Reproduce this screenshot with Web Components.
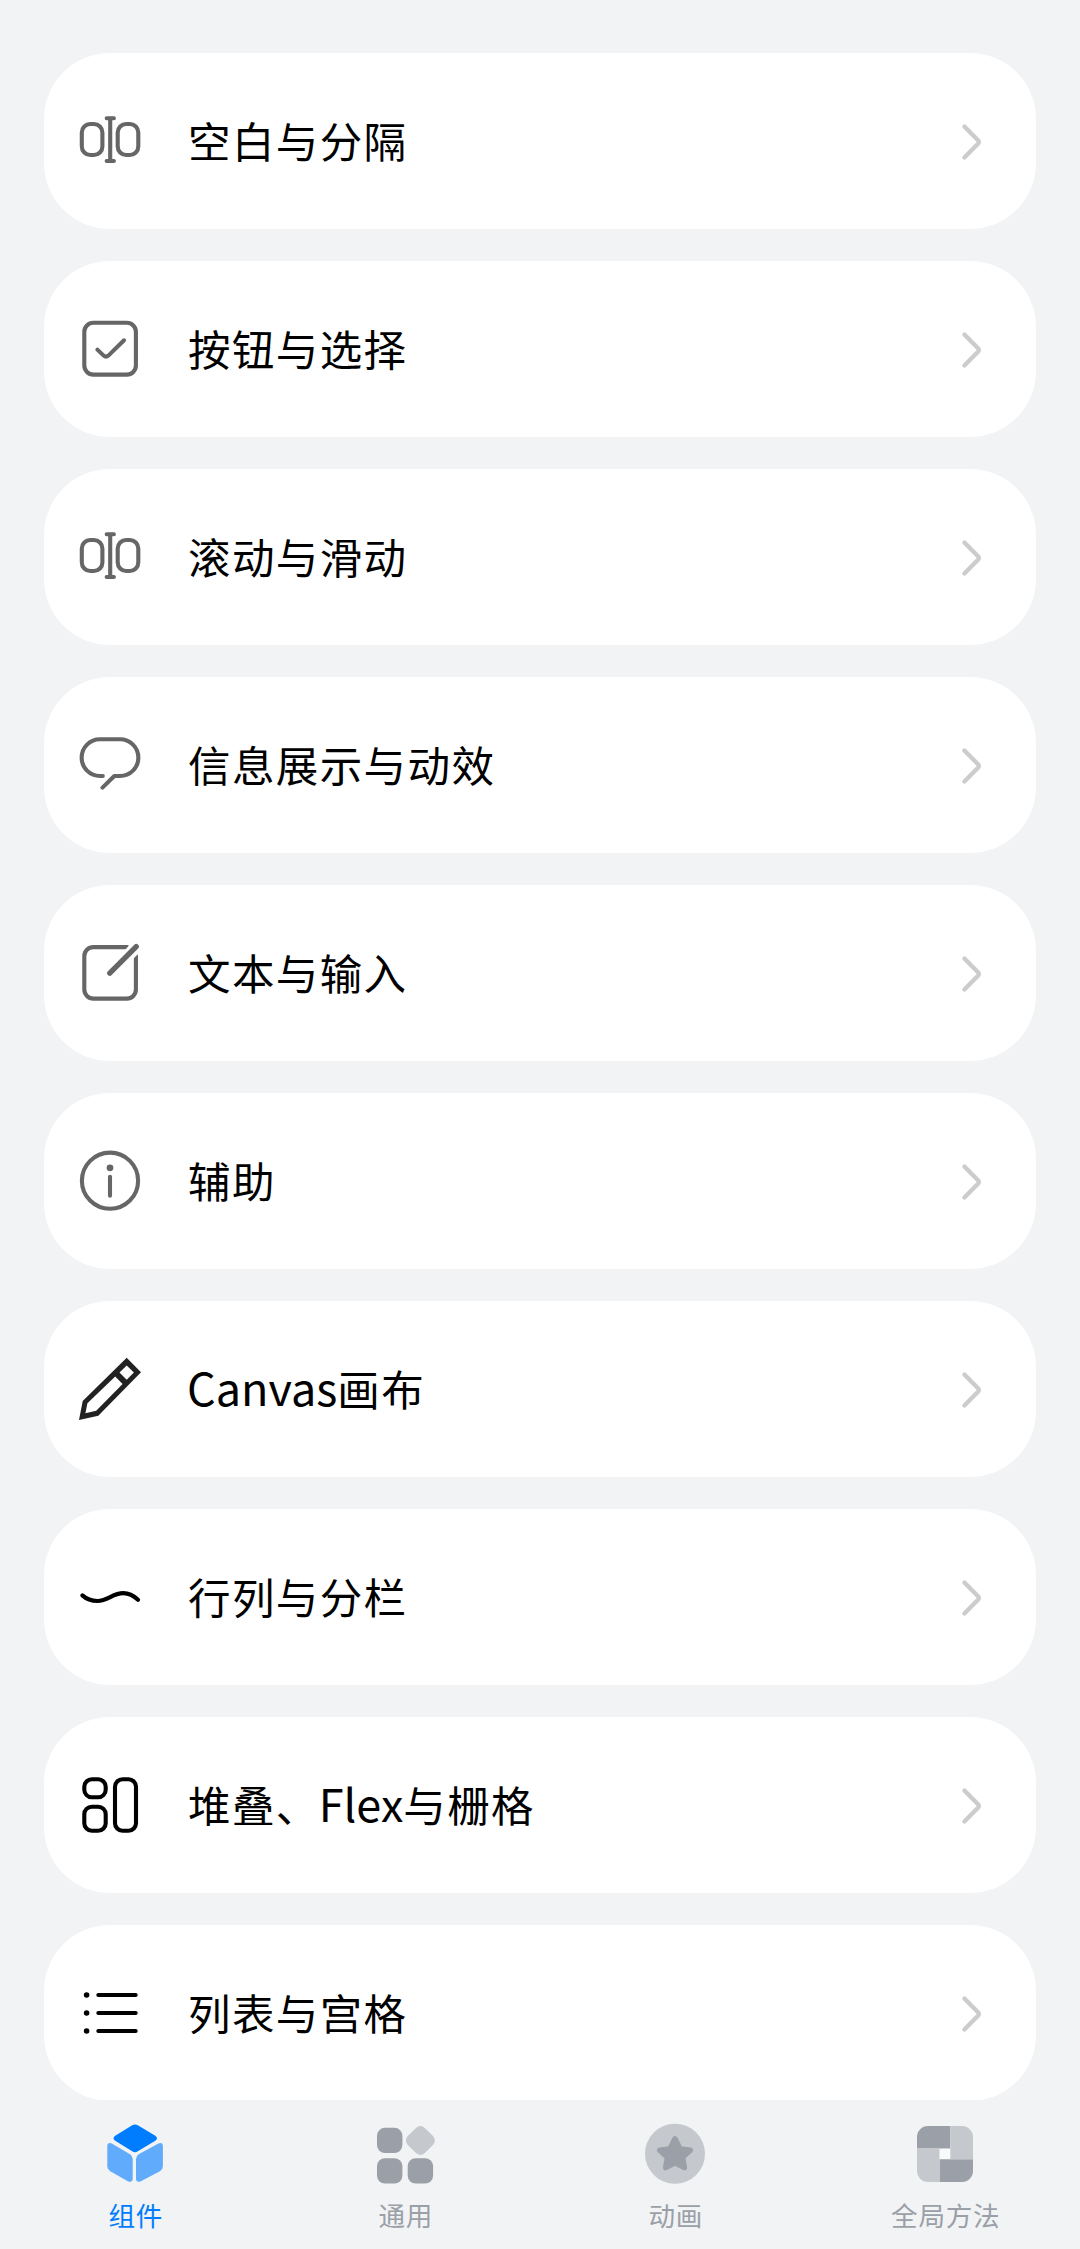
<!DOCTYPE html>
<html lang="zh-CN">
<head>
<meta charset="utf-8">
<meta name="viewport" content="width=device-width">
<title>组件</title>
<style>
html,body{margin:0;height:100%;background:#f1f3f5}
body{overflow:hidden;font-family:"Noto Sans CJK SC",sans-serif}
</style>
</head>
<body>
<gallery-app></gallery-app>
<script>
const ICONS = {
  divider: `<g fill="none" stroke="#666" stroke-width="4.1" stroke-linecap="round"><rect x="7.8" y="19" width="20.6" height="31" rx="8.5"/><rect x="43.7" y="19" width="20.6" height="31" rx="8.5"/><path d="M36.2 13.2V56M32.7 13.2H39.9M32.7 56H39.9"/></g>`,
  check: `<g fill="none" stroke="#666" stroke-width="4.1" stroke-linecap="round"><rect x="10.3" y="9.8" width="51.6" height="51.8" rx="9"/><path d="M23.4 36.6L29.6 42.6Q32 44.8 34.4 42.6L50 27.3"/></g>`,
  bubble: `<path d="M28.8 47H26A18.35 18.35 0 0 1 26 10.3H46A18.35 18.35 0 0 1 46 47H40.3L28.5 58.6" fill="none" stroke="#666" stroke-width="4.1" stroke-linecap="round" stroke-linejoin="round"/>`,
  edit: `<path d="M54.5 10.1H19.3A9 9 0 0 0 10.3 19.1V52.6A9 9 0 0 0 19.3 61.6H52.9A9 9 0 0 0 61.9 52.6V17.5" fill="none" stroke="#666" stroke-width="4.1"/><path d="M50 14L57 6.5L66 15L59 22Z" fill="#fff"/><path d="M62.2 9.7L35.8 36.2" stroke="#666" stroke-width="5.4" stroke-linecap="round"/>`,
  info: `<circle cx="36" cy="35.7" r="28.1" fill="none" stroke="#666" stroke-width="4.1"/><circle cx="36" cy="22.8" r="3.4" fill="#666"/><path d="M36 31.7V50.7" stroke="#666" stroke-width="4.1" stroke-linecap="round"/>`,
  pencil: `<path fill="#222" fill-rule="evenodd" d="M52.7 4.7L67 19.3L24.3 62.7L5 67L8.7 48ZM52.7 12.6L45.5 19.6L52.7 26.8L59.9 19.6ZM41.2 23.6L13.4 50.2L11.4 60.3L22.2 57.8L48.6 30.9Z"/>`,
  wave: `<path d="M8.4 34.4C13 38.6 18 40 23.4 40C34 40 38.5 32.2 49.3 32.2C55 32.2 59.5 34.6 64 38.8" fill="none" stroke="#000" stroke-width="4.2" stroke-linecap="round"/>`,
  blocks: `<g fill="none" stroke="#000" stroke-width="4.1"><rect x="10.3" y="10.3" width="21.4" height="18" rx="7.5"/><rect x="10.3" y="37.7" width="21.4" height="24" rx="7.5"/><rect x="41" y="10.3" width="21" height="51.4" rx="7.5"/></g>`,
  list: `<path d="M24.3 18H61.7M24.3 36H61.7M24.3 54H61.7" stroke="#000" stroke-width="4" stroke-linecap="round"/><circle cx="12.6" cy="18" r="2.8"/><circle cx="12.6" cy="36" r="2.8"/><circle cx="12.6" cy="54" r="2.8"/>`,
  cube: `<path fill="#007dff" d="M33.2 7.3Q36 5.5 38.8 7.3L56.3 17.8Q59.7 20.3 56.3 22.8L38.8 33.3Q36 35 33.2 33.3L16.2 22.8Q12.8 20.3 16.2 17.8Z"/><path fill="#61abfd" d="M8.3 28C8.3 25 10.5 24.3 12.8 25.6L31 36.2Q33.7 38 33.7 41V60.5C33.7 63.5 31.5 64.7 28.8 63.2L11.3 53.2Q8.3 51.3 8.3 48.3Z"/><path fill="#61abfd" d="M63.9 28C63.9 25 61.7 24.3 59.4 25.6L39.7 36.2Q37 38 37 41V60.5C37 63.5 39.2 64.7 41.9 63.2L60.9 53.2Q63.9 51.3 63.9 48.3Z"/>`,
  grid: `<g fill="#9b9fa7"><rect x="8" y="9.8" width="25.4" height="25.2" rx="8"/><rect x="8" y="40.2" width="25.4" height="25.4" rx="8"/><rect x="38.7" y="40.2" width="25.4" height="25.4" rx="8"/></g><rect x="39.4" y="10.5" width="24" height="24" rx="6.2" fill="#c5c8cd" transform="rotate(45 51.4 22.5)"/>`,
  star: `<circle cx="36" cy="35.8" r="30" fill="#c5c8cd"/><path d="M36 20.8L41.1 31L51.3 32.2L43.6 39.4L45.4 49.6L36 44.8L26.6 49.6L28.4 39.4L20.7 32.2L30.9 31Z" fill="#9b9fa7" stroke="#9b9fa7" stroke-width="5.4" stroke-linejoin="round"/>`,
  pin: `<rect x="29" y="29" width="14" height="14" fill="#f9fafb"/><path fill="#9b9fa7" d="M41.3 8V30.5H8V19A11 11 0 0 1 19 8ZM30.5 64V41.3H64V53A11 11 0 0 1 53 64Z"/><path fill="#c5c8cd" d="M41.3 8H53A11 11 0 0 1 64 19V41.3H41.3ZM30.5 64H19A11 11 0 0 1 8 53V30.5H30.5Z"/>`
};

customElements.define('app-icon', class extends HTMLElement {
  connectedCallback() {
    this.attachShadow({mode: 'open'}).innerHTML = `<style>:host{display:block;flex:none;width:72px;height:72px}svg{display:block}</style>
      <svg width="72" height="72" viewBox="0 0 72 72">${ICONS[this.getAttribute('name')]}</svg>`;
  }
});

customElements.define('menu-row', class extends HTMLElement {
  connectedCallback() {
    this.attachShadow({mode: 'open'}).innerHTML = `<style>
      :host{display:flex;align-items:center;flex:none;box-sizing:border-box;height:176px;padding:0 46px 0 30px;border-radius:66px;background:#fff}
      .label{flex:1;margin:0 0 3px 42px;font-size:42.5px;line-height:60px;letter-spacing:1.4px;color:#000;white-space:nowrap}
      .arrow{display:block;flex:none}
      ::slotted(span){margin-left:-1px;font-size:45px;line-height:0;letter-spacing:0}
      </style>
      <app-icon name="${this.getAttribute('icon')}"></app-icon>
      <div class="label"><slot></slot></div>
      <svg class="arrow" width="36" height="72" viewBox="0 0 36 72"><path d="M10.4 21.5L24 35.2Q25.6 37 24 38.8L10.4 52.5" fill="none" stroke="#ccc" stroke-width="4.3" stroke-linecap="round"/></svg>`;
  }
});

customElements.define('tab-item', class extends HTMLElement {
  connectedCallback() {
    this.attachShadow({mode: 'open'}).innerHTML = `<style>
      :host{display:flex;flex-direction:column;align-items:center;flex:1;color:#9b9fa7}
      :host([active]){color:#007dff}
      .label{margin:7px 0 0 1.4px;font-size:26.6px;line-height:36px;letter-spacing:.7px}
      </style>
      <app-icon name="${this.getAttribute('icon')}"></app-icon>
      <div class="label"><slot></slot></div>`;
  }
});

customElements.define('tab-bar', class extends HTMLElement {
  connectedCallback() {
    this.attachShadow({mode: 'open'}).innerHTML = `<style>
      :host{display:flex;flex:none;box-sizing:border-box;height:149px;padding-top:18px;background:#f1f3f5}
      </style><slot></slot>`;
  }
});

customElements.define('menu-list', class extends HTMLElement {
  connectedCallback() {
    this.attachShadow({mode: 'open'}).innerHTML = `<style>
      :host{display:flex;flex-direction:column;gap:32px;flex:1;min-height:0;overflow:hidden;box-sizing:border-box;padding:53px 44px 0}
      </style><slot></slot>`;
  }
});

customElements.define('gallery-app', class extends HTMLElement {
  connectedCallback() {
    this.attachShadow({mode: 'open'}).innerHTML = `<style>
      :host{display:flex;flex-direction:column;width:1080px;height:2249px;background:#f1f3f5}
      </style>
      <menu-list>
        <menu-row icon="divider">空白与分隔</menu-row>
        <menu-row icon="check">按钮与选择</menu-row>
        <menu-row icon="divider">滚动与滑动</menu-row>
        <menu-row icon="bubble">信息展示与动效</menu-row>
        <menu-row icon="edit">文本与输入</menu-row>
        <menu-row icon="info">辅助</menu-row>
        <menu-row icon="pencil"><span>Canvas</span>画布</menu-row>
        <menu-row icon="wave">行列与分栏</menu-row>
        <menu-row icon="blocks">堆叠、<span>Flex</span>与栅格</menu-row>
        <menu-row icon="list">列表与宫格</menu-row>
      </menu-list>
      <tab-bar>
        <tab-item icon="cube" active>组件</tab-item>
        <tab-item icon="grid">通用</tab-item>
        <tab-item icon="star">动画</tab-item>
        <tab-item icon="pin">全局方法</tab-item>
      </tab-bar>`;
  }
});
</script>
</body>
</html>
